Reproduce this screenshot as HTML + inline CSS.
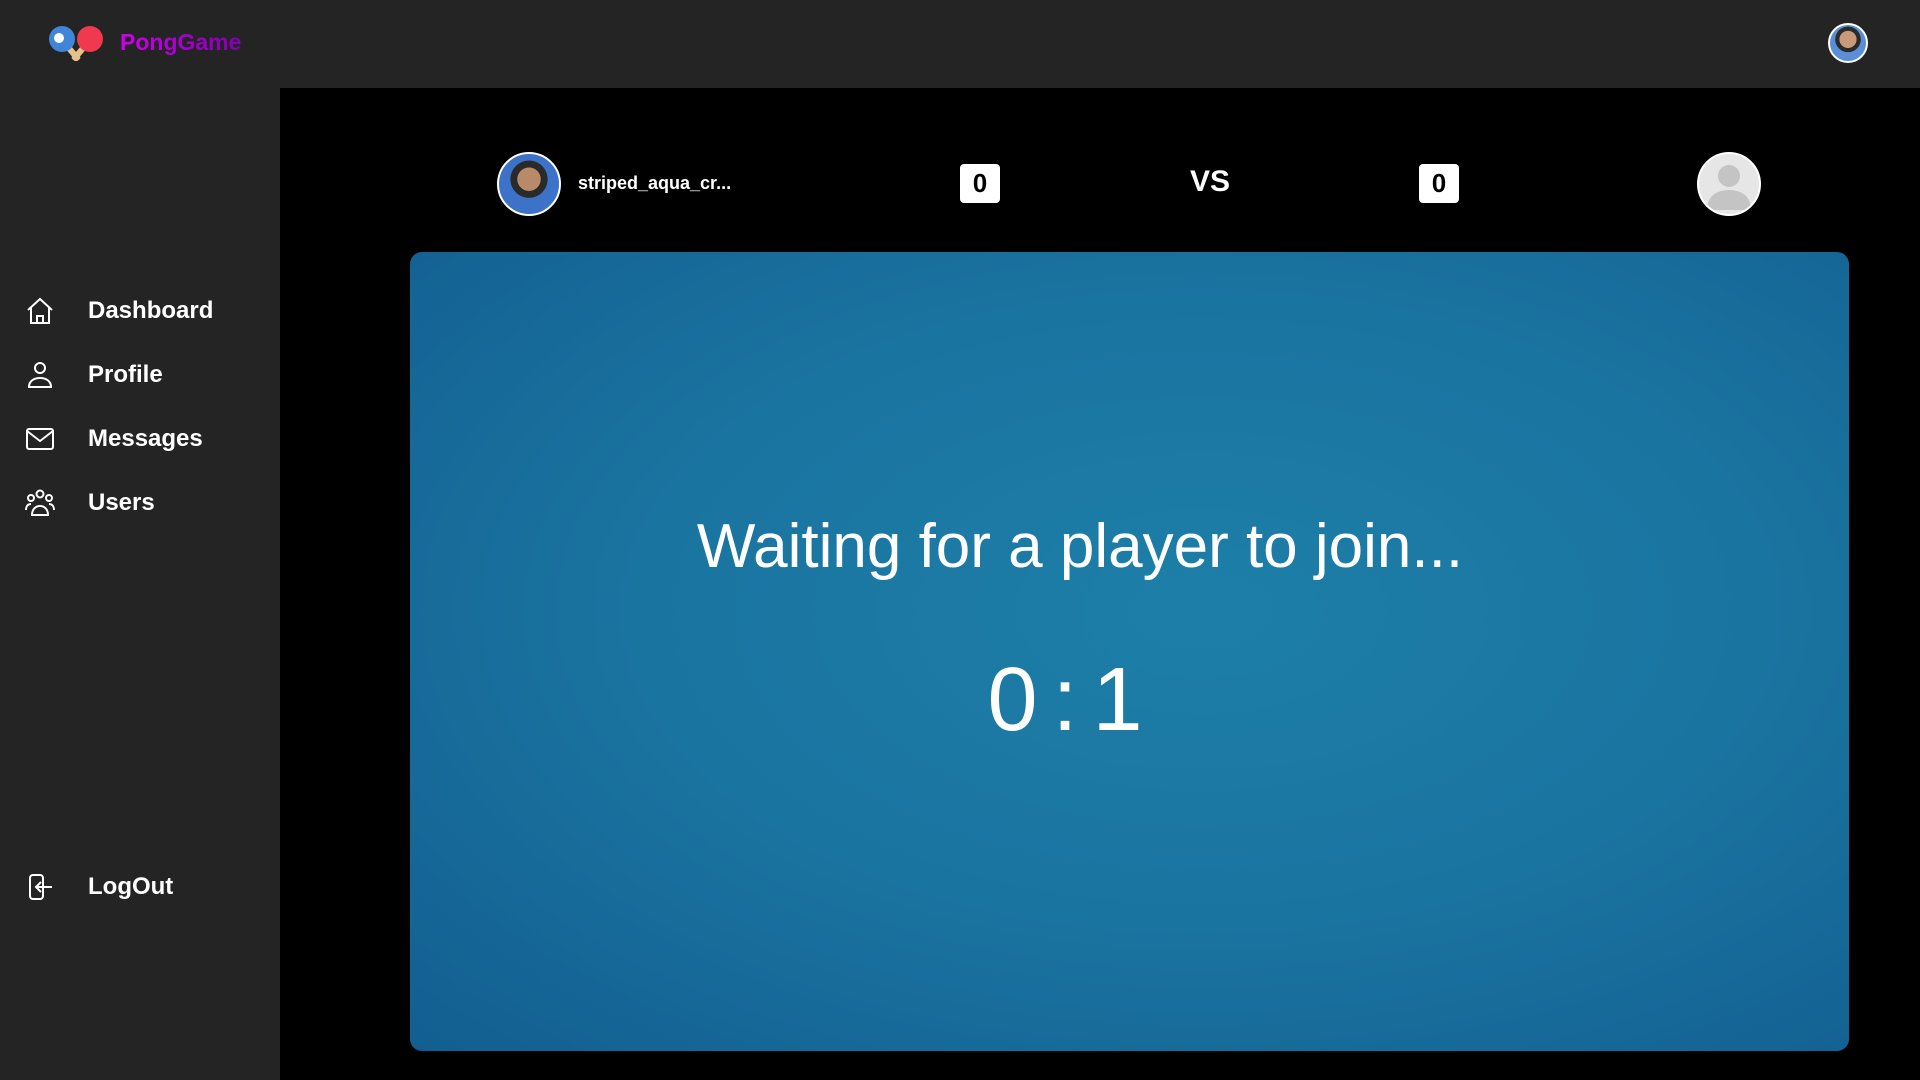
<!DOCTYPE html>
<html><head><meta charset="utf-8"><style>
*{margin:0;padding:0;box-sizing:border-box}
body{width:1920px;height:1080px;background:#000;font-family:"Liberation Sans",sans-serif;position:relative;overflow:hidden;color:#fff}
.top{position:absolute;left:0;top:0;width:1920px;height:88px;background:#242424}
.side{position:absolute;left:0;top:88px;width:280px;height:992px;background:#242424}
.nav{position:absolute;left:88px;font-size:24px;font-weight:bold;transform:translateY(-50%)}
.ic{position:absolute;left:25px;width:30px;height:30px;transform:translateY(-50%)}
.av{position:absolute;border-radius:50%;border:2px solid #fff;overflow:hidden}
.box{position:absolute;top:164px;width:40px;height:39px;background:#fff;border-radius:4px;color:#000;font-weight:bold;font-size:26px;text-align:center;line-height:39px}
.panel{position:absolute;left:410px;top:252px;width:1439px;height:799px;border-radius:12px;background:radial-gradient(ellipse at 55% 45%,#1d7fa8 0%,#1a74a0 50%,#125e90 100%)}
</style></head><body>
<div class="top"></div>
<svg style="position:absolute;left:46px;top:24px" width="62" height="40" viewBox="0 0 62 40">
<rect x="24" y="20" width="6" height="18" rx="2" fill="#e5c28a" transform="rotate(-40 27 29)"/>
<rect x="30" y="20" width="6" height="18" rx="2" fill="#e5c28a" transform="rotate(40 33 29)"/>
<circle cx="16" cy="15" r="13" fill="#3f86d8"/><circle cx="13" cy="14" r="5" fill="#fff"/>
<circle cx="44" cy="15" r="13" fill="#f0384e"/>
</svg>
<div style="position:absolute;left:120px;top:29px;font-size:23px;font-weight:bold;background:linear-gradient(90deg,#d000f0,#8000b0);-webkit-background-clip:text;color:transparent">PongGame</div>
<div class="av" style="left:1828px;top:23px;width:40px;height:40px;background:radial-gradient(circle at 50% 40%,#c99a7a 0 30%,#2b2b2b 31% 45%,#5a8fd8 46%)"></div>
<div class="side"></div>
<svg class="ic" style="top:311px" viewBox="0 0 30 30" fill="none" stroke="#fff" stroke-width="2"><path d="M3 14L15 3l12 11M6 12v15h18V12M12 27v-7h6v7"/></svg>
<div class="nav" style="top:311px">Dashboard</div>
<svg class="ic" style="top:375px" viewBox="0 0 30 30" fill="none" stroke="#fff" stroke-width="2"><circle cx="15" cy="8" r="5"/><path d="M4 27c0-6 5-9 11-9s11 3 11 9z"/></svg>
<div class="nav" style="top:375px">Profile</div>
<svg class="ic" style="top:439px" viewBox="0 0 30 30" fill="none" stroke="#fff" stroke-width="2"><rect x="2" y="5" width="26" height="20" rx="2"/><path d="M2 7l13 10 13-10"/></svg>
<div class="nav" style="top:439px">Messages</div>
<svg class="ic" style="top:503px" viewBox="0 0 30 30" fill="none" stroke="#fff" stroke-width="2"><circle cx="15" cy="6" r="3.5"/><circle cx="6" cy="10" r="3"/><circle cx="24" cy="10" r="3"/><path d="M7 27c0-5 3-9 8-9s8 4 8 9zM1 22c0-4 2-6 5-6M29 22c0-4-2-6-5-6"/></svg>
<div class="nav" style="top:503px">Users</div>
<svg class="ic" style="top:887px" viewBox="0 0 30 30" fill="none" stroke="#fff" stroke-width="2"><rect x="5" y="3" width="13" height="24" rx="3"/><path d="M27 15H11m5-5l-5 5 5 5"/></svg>
<div class="nav" style="top:887px">LogOut</div>

<div class="av" style="left:497px;top:152px;width:64px;height:64px;background:radial-gradient(circle at 50% 42%,#b98a6a 0 25%,#2a2a2a 26% 40%,#3c72c8 41%)"></div>
<div style="position:absolute;left:578px;top:173px;font-size:18px;font-weight:bold">striped_aqua_cr...</div>
<div class="box" style="left:960px">0</div>
<div style="position:absolute;left:1180px;top:165px;width:60px;text-align:center;font-size:30px;font-weight:bold">VS</div>
<div class="box" style="left:1419px">0</div>
<div class="av" style="left:1697px;top:152px;width:64px;height:64px;background:#e6e6e6"><svg width="60" height="60" viewBox="0 0 60 60"><circle cx="30" cy="22" r="11" fill="#c4c4c4"/><path d="M8 56c0-14 10-20 22-20s22 6 22 20z" fill="#c4c4c4"/></svg></div>

<div class="panel"></div>
<div style="position:absolute;left:410px;width:1340px;top:511px;text-align:center;font-size:62px">Waiting for a player to join...</div>
<div style="position:absolute;left:410px;width:1310px;top:650px;text-align:center;font-size:90px;line-height:100px;word-spacing:-10px">0 : 1</div>
</body></html>
